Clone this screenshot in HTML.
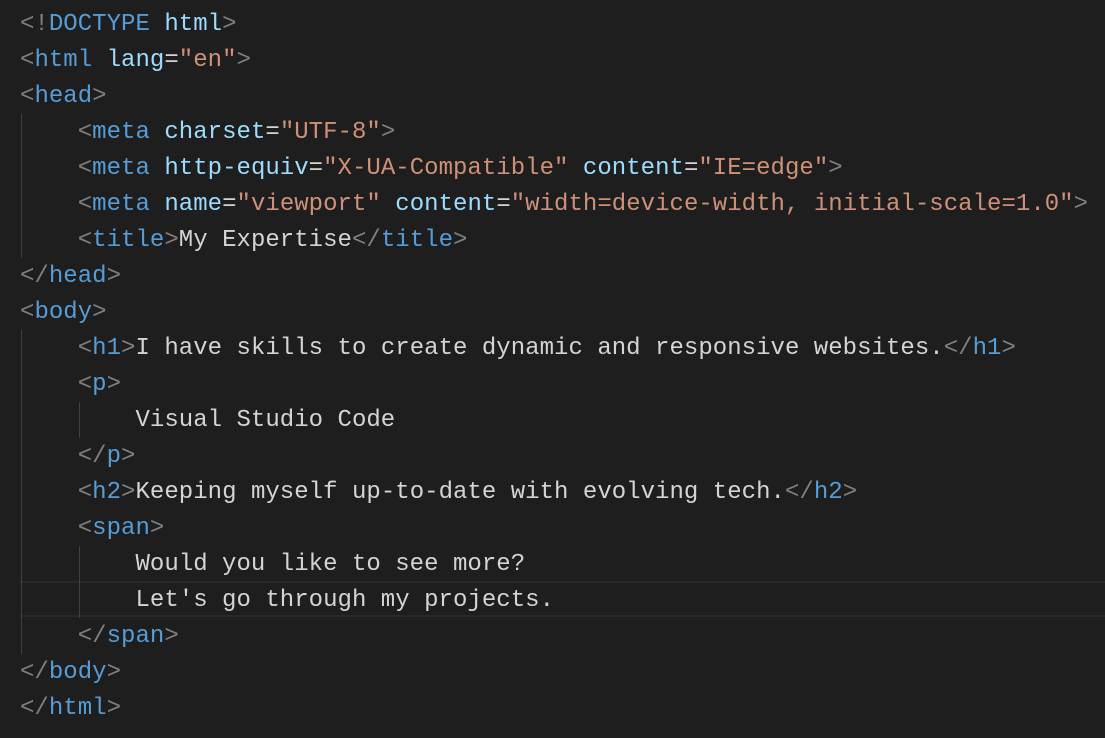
<!DOCTYPE html>
<html><head><style>
body{margin:0;background:#1e1e1e;width:1105px;height:738px;overflow:hidden;position:relative}
.c{position:absolute;top:7px;left:20px;font:24px/36px "Liberation Mono",monospace;color:#d4d4d4;white-space:pre;letter-spacing:0.03px}
.b{color:#808080}.t{color:#569cd6}.a{color:#9cdcfe}.s{color:#ce9178}
.g{position:absolute;width:1px;background:#404040}
.hl{position:absolute;left:20px;right:0;top:581px;height:36px;border-top:2px solid #282828;border-bottom:2px solid #282828;box-sizing:border-box}
</style></head><body>
<div class="hl"></div>
<div class="g" style="left:21px;top:114px;height:144px"></div>
<div class="g" style="left:21px;top:330px;height:324px"></div>
<div class="g" style="left:79px;top:402px;height:36px"></div>
<div class="g" style="left:79px;top:546px;height:72px"></div>
<div class="c"><span class="b">&lt;!</span><span class="t">DOCTYPE</span> <span class="a">html</span><span class="b">&gt;</span>
<span class="b">&lt;</span><span class="t">html</span> <span class="a">lang</span>=<span class="s">"en"</span><span class="b">&gt;</span>
<span class="b">&lt;</span><span class="t">head</span><span class="b">&gt;</span>
    <span class="b">&lt;</span><span class="t">meta</span> <span class="a">charset</span>=<span class="s">"UTF-8"</span><span class="b">&gt;</span>
    <span class="b">&lt;</span><span class="t">meta</span> <span class="a">http-equiv</span>=<span class="s">"X-UA-Compatible"</span> <span class="a">content</span>=<span class="s">"IE=edge"</span><span class="b">&gt;</span>
    <span class="b">&lt;</span><span class="t">meta</span> <span class="a">name</span>=<span class="s">"viewport"</span> <span class="a">content</span>=<span class="s">"width=device-width, initial-scale=1.0"</span><span class="b">&gt;</span>
    <span class="b">&lt;</span><span class="t">title</span><span class="b">&gt;</span>My Expertise<span class="b">&lt;/</span><span class="t">title</span><span class="b">&gt;</span>
<span class="b">&lt;/</span><span class="t">head</span><span class="b">&gt;</span>
<span class="b">&lt;</span><span class="t">body</span><span class="b">&gt;</span>
    <span class="b">&lt;</span><span class="t">h1</span><span class="b">&gt;</span>I have skills to create dynamic and responsive websites.<span class="b">&lt;/</span><span class="t">h1</span><span class="b">&gt;</span>
    <span class="b">&lt;</span><span class="t">p</span><span class="b">&gt;</span>
        Visual Studio Code
    <span class="b">&lt;/</span><span class="t">p</span><span class="b">&gt;</span>
    <span class="b">&lt;</span><span class="t">h2</span><span class="b">&gt;</span>Keeping myself up-to-date with evolving tech.<span class="b">&lt;/</span><span class="t">h2</span><span class="b">&gt;</span>
    <span class="b">&lt;</span><span class="t">span</span><span class="b">&gt;</span>
        Would you like to see more?
        Let's go through my projects.
    <span class="b">&lt;/</span><span class="t">span</span><span class="b">&gt;</span>
<span class="b">&lt;/</span><span class="t">body</span><span class="b">&gt;</span>
<span class="b">&lt;/</span><span class="t">html</span><span class="b">&gt;</span></div>
</body></html>
